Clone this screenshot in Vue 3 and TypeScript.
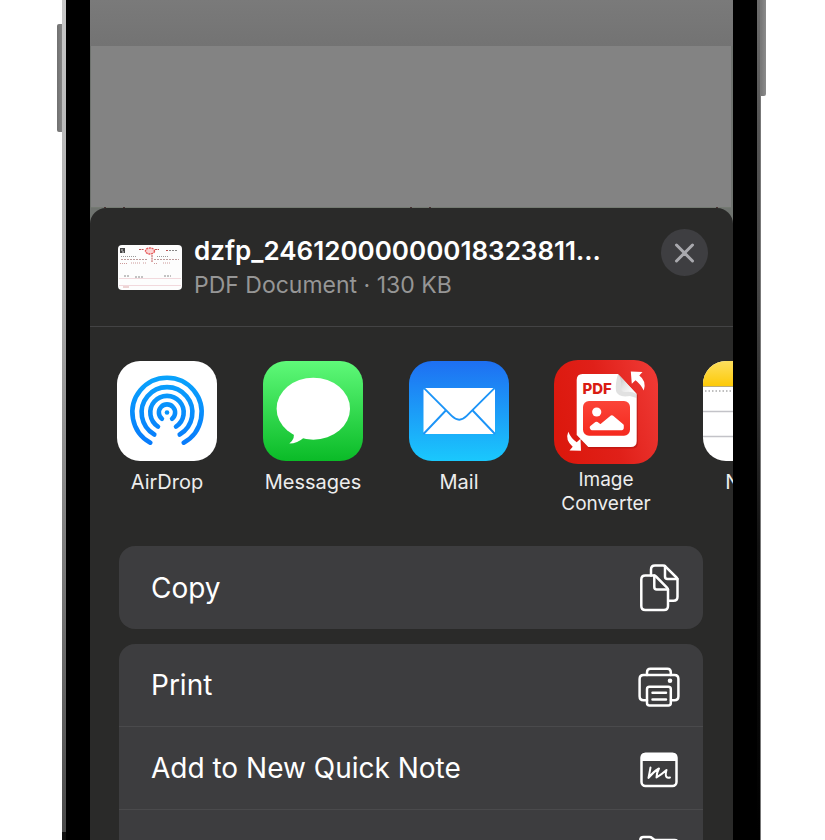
<script setup lang="ts">
import { ref } from 'vue'

interface ShareTarget {
  id: string
  label: string
  large?: boolean
}

const fileName = ref('dzfp_24612000000018323811...')
const fileInfo = ref('PDF Document · 130 KB')

const targets: ShareTarget[] = [
  { id: 'airdrop', label: 'AirDrop' },
  { id: 'messages', label: 'Messages' },
  { id: 'mail', label: 'Mail' },
  { id: 'converter', label: 'Image Converter', large: true },
  { id: 'notes', label: 'Notes' },
]

const actionGroups: { id: string; label: string }[][] = [
  [{ id: 'copy', label: 'Copy' }],
  [
    { id: 'print', label: 'Print' },
    { id: 'quicknote', label: 'Add to New Quick Note' },
    { id: 'files', label: 'Save to Files' },
  ],
]
</script>

<template>
  <div class="stage">
    <div class="key key-left"></div>
    <div class="metal metal-left"></div>
    <div class="bezel"></div>
    <main class="screen">
      <div class="backdrop-bar"></div>
      <div class="backdrop-page"><div class="ticks"></div></div>
      <section class="sheet" aria-label="Share">
        <header class="file">
          <svg class="thumb" viewBox="0 0 64 45" aria-hidden="true">
            <rect width="64" height="45" rx="4" fill="#fdfdfd" />
            <path d="M2 3h5v5H2z" fill="#444" />
            <path d="M3 5h2M5 6v2" stroke="#ddd" stroke-width="1" />
            <ellipse cx="32" cy="6" rx="4.500" ry="3" fill="#fbd5d5" stroke="#e65a5a" stroke-width="1.400" stroke-dasharray="2 .7" />
            <g fill="none" stroke-width="1">
              <path d="M21 4.500h5M37 4.500h4M48 5.500h2M34 10v7" stroke="#b55" stroke-dasharray="2 .6" />
              <path d="M51 5.500h9" stroke="#888" stroke-dasharray="2 1" />
              <path d="M3 11.500h15M39 11.500h12" stroke="#999" stroke-dasharray="1 1" />
              <path d="M3 14.500h27M36 14.500h25" stroke="#b99" stroke-dasharray="2 1" />
              <path d="M2 18.500h8M13 18h9M25 18h4M36 18.500h4M45 18h8" stroke="#c99" stroke-dasharray="1 1" />
              <path d="M6 31h6M17 32h9M46 31h7" stroke="#888" stroke-dasharray="2 1" />
              <path d="M1 33.500h62M1 40.500h62" stroke="#edc9cf" stroke-width=".7" />
              <path d="M5 42h6" stroke="#daa" />
            </g>
          </svg>
          <div class="file-text">
            <h1>{{ fileName }}</h1>
            <p>{{ fileInfo }}</p>
          </div>
          <button class="close" type="button" aria-label="Close">
            <svg viewBox="0 0 47 47" aria-hidden="true">
              <path d="M15.500 16 31.500 32M31.500 16 15.500 32" />
            </svg>
          </button>
        </header>

        <nav class="apps" aria-label="Apps">
          <button v-for="t in targets" :key="t.id" type="button" class="app" :class="{ large: t.large }">
            <svg v-if="t.id === 'airdrop'" class="icon" viewBox="0 0 100 100" aria-hidden="true">
              <defs>
                <linearGradient id="air" gradientUnits="userSpaceOnUse" x1="0" y1="15" x2="0" y2="85">
                  <stop offset="0" stop-color="#09a3fc" /><stop offset="1" stop-color="#087afb" />
                </linearGradient>
              </defs>
              <rect width="100" height="100" rx="23" fill="#fff" />
              <g fill="none" stroke="url(#air)" stroke-width="4.600" stroke-linecap="round">
                <path d="M33.300 81.700A34.600 34.600 0 1 1 66.700 81.700" />
                <path d="M37.300 73.500A25.400 25.400 0 1 1 62.700 73.500" />
                <path d="M41 65.600A16.700 16.700 0 1 1 59 65.600" />
                <path d="M44.900 57.800A8.100 8.100 0 1 1 55.100 57.800" />
              </g>
              <circle cx="50" cy="51.500" r="2.300" fill="#0894fc" />
            </svg>

            <svg v-else-if="t.id === 'messages'" class="icon" viewBox="0 0 100 100" aria-hidden="true">
              <defs>
                <linearGradient id="msg" x1="0" y1="0" x2="0" y2="1">
                  <stop offset="0" stop-color="#5ff979" /><stop offset="1" stop-color="#0abb27" />
                </linearGradient>
              </defs>
              <rect width="100" height="100" rx="23" fill="url(#msg)" />
              <ellipse cx="50.300" cy="47.700" rx="36.700" ry="31" fill="#fff" />
              <path d="M30 71Q33 77 26.300 82.600Q34.500 82.500 41 76.500Z" fill="#fff" />
            </svg>

            <svg v-else-if="t.id === 'mail'" class="icon" viewBox="0 0 100 100" aria-hidden="true">
              <defs>
                <linearGradient id="mail" x1="0" y1="0" x2="0" y2="1">
                  <stop offset="0" stop-color="#1e6ff2" /><stop offset="1" stop-color="#1ac8fd" />
                </linearGradient>
              </defs>
              <rect width="100" height="100" rx="23" fill="url(#mail)" />
              <rect x="14.500" y="27" width="71.500" height="46" rx="2.500" fill="#fff" />
              <g fill="none" stroke="#1c94f7" stroke-width="1.900">
                <path d="M15 27.200 42.700 54.900Q50.200 62.400 57.700 54.900L85.500 27.200" />
                <path d="M36.800 49.500 14.500 73M63.700 49.500 86 73" />
              </g>
            </svg>

            <svg v-else-if="t.id === 'converter'" class="icon" viewBox="0 0 104 104" aria-hidden="true">
              <defs>
                <linearGradient id="conv" x1="0" y1=".6" x2="1" y2=".3">
                  <stop offset="0" stop-color="#dc180d" /><stop offset=".5" stop-color="#e02019" /><stop offset="1" stop-color="#ee3833" />
                </linearGradient>
                <linearGradient id="fold" x1="0" y1="0" x2="1" y2=".8">
                  <stop offset="0" stop-color="#bbb" /><stop offset=".5" stop-color="#e6e6e6" /><stop offset="1" stop-color="#fff" />
                </linearGradient>
                <linearGradient id="pic" x1="0" y1="0" x2="0" y2="1">
                  <stop offset="0" stop-color="#fb4438" /><stop offset="1" stop-color="#f5291e" />
                </linearGradient>
              </defs>
              <rect width="104" height="104" rx="24" fill="url(#conv)" />
              <path d="M28 15.500H65L84 35V83Q84 88.500 78 88.500H35L23 76V20Q23 15.500 28 15.500Z" fill="#8d0b06" opacity=".35" />
              <path d="M28.500 14H64L82.700 34V81Q82.700 87 76.700 87H34.300L22.700 75V20Q22.700 14 28.500 14Z" fill="#fff" />
              <path d="M64 14Q61 24 62 31Q64 38 76 36L82.700 38V34Z" fill="#aaa" opacity=".35" />
              <path d="M64 14Q68 19 67 28Q67 32 71 32Q78 31 82.700 34Z" fill="url(#fold)" />
              <text x="28.500" y="34" class="pdf">PDF</text>
              <rect x="29" y="41" width="47" height="34.700" rx="6" fill="url(#pic)" />
              <circle cx="42.700" cy="52" r="4.600" fill="#fff" />
              <path d="M37.500 67.500 42.500 63.500 46.500 66.500 58 57 68 65.500V67.700Q68 68.500 66.500 68.500H38Z" fill="#fff" stroke="#fff" stroke-width="3.600" stroke-linejoin="round" />
              <path d="M76.800 11.500 88.500 12 85.300 15.600Q92.800 21 89.800 30.600Q86.500 24 81.500 20.300L77.800 23.800Z" fill="#fff" />
              <path d="M27 90.800 15.500 90.400 18.700 86.800Q10.800 80 14.300 71.800Q17.200 78.800 22.700 82.200L26.500 78.700Z" fill="#fff" />
            </svg>

            <svg v-else class="icon" viewBox="0 0 100 100" aria-hidden="true">
              <defs>
                <linearGradient id="note" x1="0" y1="0" x2="0" y2="1">
                  <stop offset="0" stop-color="#fddf5e" /><stop offset="1" stop-color="#fdca08" />
                </linearGradient>
                <clipPath id="noteclip"><rect width="100" height="100" rx="23" /></clipPath>
              </defs>
              <g clip-path="url(#noteclip)">
                <rect width="100" height="100" fill="#fff" />
                <rect width="100" height="25" fill="url(#note)" />
                <path d="M0 25.500H100" stroke="#b9ac7c" stroke-width="1" />
                <path d="M2 30H100" stroke="#aaa" stroke-width="1.400" stroke-dasharray="1.500 2" />
                <path d="M0 50.500H100M0 75.500H100" stroke="#c3c3c8" stroke-width="1.400" />
              </g>
            </svg>
            <span class="app-label">{{ t.label }}</span>
          </button>
        </nav>

        <div class="groups">
          <div v-for="(group, i) in actionGroups" :key="i" class="group">
            <button v-for="a in group" :key="a.id" type="button" class="action">
              <span>{{ a.label }}</span>
              <svg class="glyph" viewBox="0 0 44 49" aria-hidden="true">
                <g v-if="a.id === 'copy'">
                  <path d="M8.300 12.500H16.500Q18 12.500 19 13.500L30 24.700Q31 25.700 31 27V43Q31 47 27 47H8.300Q4.300 47 4.300 43V16.500Q4.300 12.500 8.300 12.500Z" />
                  <path d="M17.300 12.500V24Q17.300 26.500 19.800 26.500H31" />
                  <path d="M14 12.500V6.600Q14 2.600 18 2.600H26Q27.500 2.600 28.500 3.600L39.500 14.500Q40.500 15.500 40.500 17V33.800Q40.500 37.800 36.500 37.800H31.500" />
                  <path d="M28 3V13.500Q28 16 30.500 16H40.500" />
                </g>
                <g v-else-if="a.id === 'print'">
                  <path d="M10 39.300H6.600Q2.600 39.300 2.600 35.300V18Q2.600 14 6.600 14H37.400Q41.400 14 41.400 18V35.300Q41.400 39.300 37.400 39.300H34" />
                  <path d="M10 14V11.300Q10 7.800 13.500 7.800H30.300Q33.800 7.800 33.800 11.300V14" />
                  <rect x="10" y="25.700" width="23.800" height="18.900" rx="2.500" />
                  <path d="M15.500 31.800H29M15.500 38.500H29" />
                  <circle class="solid" cx="33" cy="19.800" r="2.300" />
                </g>
                <g v-else-if="a.id === 'quicknote'">
                  <rect x="4.500" y="9.700" width="35" height="32.300" rx="4" />
                  <path class="solid" d="M4 17V13Q4 9 8 9H36Q40 9 40 13V17Z" />
                  <path class="scribble" d="M13.500 23.500Q12.500 29 11.500 34Q16.500 27.500 22 24.500Q19.500 29 19.500 33.500Q24.500 30.500 29.500 26Q28 31 29.500 33Q30.500 34 33 33.500" />
                </g>
                <g v-else>
                  <path d="M3.300 40V13Q3.300 10 6.500 10H12.500Q14 10 15 11L16.500 12.300Q17.300 13 18.500 13H37.500Q40.700 13 40.700 16V40Z" />
                  <path d="M3.300 20H40.700" />
                </g>
              </svg>
            </button>
          </div>
        </div>
      </section>
    </main>
    <div class="bezel"></div>
    <div class="metal metal-right"></div>
    <div class="key key-right"></div>
  </div>
</template>

<style>
body {
  margin: 0;
  background: #fff;
}
</style>

<style scoped>
* {
  box-sizing: border-box;
}
button {
  border: 0;
  margin: 0;
  padding: 0;
  background: none;
  color: inherit;
  font: inherit;
  cursor: pointer;
}
.stage {
  display: grid;
  grid-template-columns: 5px 4px 24px minmax(0, 1fr) 24px 4px 5px;
  height: 100vh;
  padding: 0 59px 0 57px;
  overflow: hidden;
  font-family: Inter, "Liberation Sans", sans-serif;
}
.key-left {
  height: 108px;
  margin-top: 24px;
  border-radius: 2px 0 0 2px;
  background: linear-gradient(90deg, #707070, #858585);
}
.key-right {
  height: 96px;
  border-radius: 0 0 2px;
  background: linear-gradient(90deg, #777, #8c8c8c);
}
.metal-left {
  background: linear-gradient(#c8c8c8, #a8a8a8 35%, #777 70%, #4a4a4a 99%, #111 99%);
}
.metal-right {
  background: linear-gradient(#6c6c6c, #555 15%, #444 35%, #111 65%, #000 99%);
  border-right: 1px solid #777;
}
.bezel {
  background: #000;
}
.screen {
  min-width: 0;
  overflow: hidden;
  background: #6f736f;
}
.backdrop-bar {
  height: 46px;
  background: linear-gradient(#7a7a7a, #737373);
}
.backdrop-page {
  display: flex;
  align-items: flex-end;
  height: 162px;
  margin: 0 2px 0 1px;
  background: #838383;
}
.ticks {
  width: 100%;
  height: 1px;
  background: repeating-linear-gradient(90deg, transparent 0 13px, #4a3535 13px 15px, transparent 15px 32px, #4a3535 32px 34px, transparent 34px 306px) #747a72;
}
.sheet {
  border-radius: 16px 16px 0 0;
  background: #2a2a29;
  color: #fff;
}
.file {
  display: flex;
  align-items: flex-start;
  height: 119px;
  padding: 21px 25px 0 28px;
  border-bottom: 1px solid #434344;
}
.thumb {
  flex: none;
  width: 64px;
  height: 45px;
  margin-top: 16px;
}
.file-text {
  flex: 1;
  min-width: 0;
  margin: 6px 12px 0;
}
h1,
p {
  margin: 0;
  white-space: nowrap;
}
h1 {
  overflow: hidden;
  font-size: 26px;
  font-weight: 600;
  line-height: 32px;
}
p {
  margin-top: 4px;
  color: #969696;
  font-size: 23px;
  line-height: 28px;
}
.close {
  flex: none;
  width: 47px;
  height: 47px;
  border-radius: 50%;
  background: #3e3e41;
}
.close svg {
  display: block;
  fill: none;
  stroke: #a9a9ae;
  stroke-width: 3;
  stroke-linecap: round;
}
.apps {
  display: flex;
  align-items: flex-start;
  height: 219px;
  padding: 34px 0 0 4px;
  overflow: hidden;
}
.app {
  display: flex;
  flex: none;
  flex-direction: column;
  align-items: center;
  gap: 9px;
  width: 146px;
}
.app.large {
  gap: 4px;
  width: 148px;
  margin-top: -1px;
}
.icon {
  width: 100px;
  height: 100px;
}
.large .icon {
  width: 104px;
  height: 104px;
}
.app-label {
  width: 100px;
  color: #ededed;
  font-size: 20px;
  line-height: 24px;
}
.large .app-label {
  font-size: 19px;
}
.pdf {
  fill: #d91c12;
  font-size: 15px;
  font-weight: 800;
}
.groups {
  display: flex;
  flex-direction: column;
  gap: 15px;
  padding: 0 30px 0 29px;
}
.group {
  overflow: hidden;
  border-radius: 16px;
  background: #3d3d3f;
}
.action {
  display: flex;
  align-items: center;
  justify-content: space-between;
  width: 100%;
  height: 83px;
  padding: 0 22px 0 32px;
  font-size: 28px;
  text-align: left;
}
.action:not(:last-child) {
  border-bottom: 1px solid #4a4a4c;
}
.glyph {
  flex: none;
  width: 44px;
  height: 49px;
  fill: none;
  stroke: #fff;
  stroke-width: 2.500;
  stroke-linecap: round;
  stroke-linejoin: round;
}
.glyph .solid {
  fill: #fff;
  stroke: none;
}
.glyph .scribble {
  stroke-width: 2;
}
</style>
